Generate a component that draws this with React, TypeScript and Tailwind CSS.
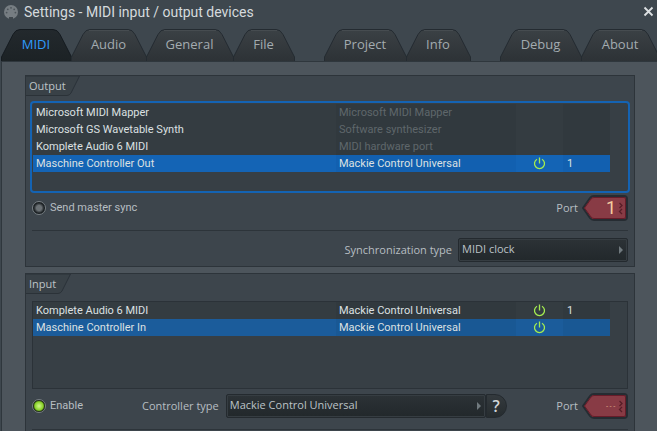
import type { ReactNode } from 'react';
import clsx from 'clsx';

type Device = {
  name: string;
  type: string;
  muted?: boolean;
  on?: boolean;
  port?: string;
};

const outputs: Device[] = [
  { name: 'Microsoft MIDI Mapper', type: 'Microsoft MIDI Mapper', muted: true },
  { name: 'Microsoft GS Wavetable Synth', type: 'Software synthesizer', muted: true },
  { name: 'Komplete Audio 6 MIDI', type: 'MIDI hardware port', muted: true },
  { name: 'Maschine Controller Out', type: 'Mackie Control Universal', on: true, port: '1' },
];

const inputs: Device[] = [
  { name: 'Komplete Audio 6 MIDI', type: 'Mackie Control Universal', on: true, port: '1' },
  { name: 'Maschine Controller In', type: 'Mackie Control Universal', on: true },
];

const tabGroups = [
  [
    { label: 'MIDI', width: 70 },
    { label: 'Audio', width: 75 },
    { label: 'General', width: 87 },
    { label: 'File', width: 61 },
  ],
  [
    { label: 'Project', width: 82 },
    { label: 'Info', width: 64 },
  ],
  [
    { label: 'Debug', width: 81 },
    { label: 'About', width: 78 },
  ],
];

const DinIcon = () => (
  <svg width="14" height="14" viewBox="0 0 14 14" aria-hidden="true">
    <circle cx="7" cy="7" r="7" fill="#767d82" />
    <rect x="5" y="12" width="4" height="2" fill="#3f474d" />
    <g fill="#4b5359">
      <circle cx="2.6" cy="7.6" r="0.9" />
      <circle cx="3.8" cy="4.3" r="0.9" />
      <circle cx="7" cy="2.8" r="0.9" />
      <circle cx="10.2" cy="4.3" r="0.9" />
      <circle cx="11.4" cy="7.6" r="0.9" />
    </g>
  </svg>
);

const PowerIcon = () => (
  <svg width="13" height="13" viewBox="0 0 13 13" fill="none" stroke="#a4ec50" strokeWidth="1.3" className="mx-auto block">
    <path d="M4 2.2A5 5 0 1 0 9 2.2" />
    <path d="M6.5 0.5V6.5" />
  </svg>
);

const Tab = ({ label, width, active }: { label: string; width: number; active: boolean }) => {
  const shape = `M0.5 32V28L12 5.5Q14.5 0.5 19 0.5H${width - 18}Q${width - 13.5} 0.5 ${width - 11} 5.5L${width + 0.5} 28V32`;
  const fill = active ? 'url(#tab-active)' : 'url(#tab-idle)';

  return (
    <button
      type="button"
      role="tab"
      aria-selected={active}
      className={clsx('relative h-8 shrink-0 pb-0.5 text-[13px] leading-[30px]', active ? 'text-[#2f9bfb]' : 'text-[#a3abb0]')}
      style={{ width }}
    >
      <svg width={width + 1} height="32" className="absolute left-0 top-0" aria-hidden="true">
        <defs>
          <linearGradient id="tab-active" x1="0" y1="0" x2="0" y2="1">
            <stop offset="0" stopColor="#23292d" />
            <stop offset="1" stopColor="#1c2225" />
          </linearGradient>
          <linearGradient id="tab-idle" x1="0" y1="0" x2="0" y2="1">
            <stop offset="0" stopColor="#3b4145" />
            <stop offset="1" stopColor="#2d3236" />
          </linearGradient>
        </defs>
        <path d={shape} fill={fill} stroke={active ? '#151b20' : '#242b31'} />
        {!active && <path d={`M18 1.5H${width - 17}`} stroke="#464c50" />}
      </svg>
      <span className="relative">{label}</span>
    </button>
  );
};

const DeviceTable = ({ label, devices, focused }: { label: string; devices: Device[]; focused?: boolean }) => {
  const selected = devices.length - 1;

  return (
    <div
      className={clsx(
        'bg-[#373f45]',
        focused ? 'mx-1 h-[92px] rounded border-2 border-[#1463b3] p-px' : 'mx-1.5 h-[88px] border border-[#2b3238]'
      )}
    >
      <table
        aria-label={label}
        className="w-full table-fixed border-collapse font-[Roboto,'Open_Sans',sans-serif] text-[11px] leading-[17px]"
      >
        <colgroup>
          <col />
          <col className="w-[180px]" />
          <col className="w-[47px]" />
          <col className="w-[47px]" />
          <col className="w-[17px]" />
        </colgroup>
        <tbody>
          {devices.map((device, index) => {
            const active = index === selected;
            const blue = focused ? 'bg-[#1464b5]' : 'bg-[#1b5c9b]';
            const blueDark = focused ? 'bg-[#1260b0]' : 'bg-[#195894]';
            return (
              <tr key={device.name} className="h-[17px] text-[#dce0e2]">
                <td className={clsx('truncate p-0 pl-[3px]', active ? blue : 'bg-[#343c41]')}>{device.name}</td>
                <td className={clsx('truncate p-0 pl-[3px]', active ? blueDark : 'bg-[#31393e]', device.muted && 'text-[#5f676b]')}>
                  {device.type}
                </td>
                <td className={clsx('p-0', active ? blue : 'bg-[#343c41]')}>{device.on && <PowerIcon />}</td>
                <td className={clsx('p-0 pl-1', active ? blueDark : 'bg-[#31393e]')}>{device.port}</td>
                <td className="p-0" />
              </tr>
            );
          })}
        </tbody>
      </table>
    </div>
  );
};

const Toggle = ({ label, checked }: { label: string; checked?: boolean }) => (
  <label className="flex items-center gap-1 font-[Roboto,'Open_Sans',sans-serif] text-[#b7bec2]">
    <input
      type="checkbox"
      defaultChecked={checked}
      className="size-3.5 appearance-none rounded-full border border-[#777e83] bg-[radial-gradient(circle,#6b7175_30%,#181d20_62%)] checked:bg-[radial-gradient(circle,#c4f07a_10%,#86cf26_50%,#1c2812_66%)]"
    />
    {label}
  </label>
);

const Dropdown = ({ id, value, className }: { id: string; value: string; className: string }) => (
  <div className={clsx('relative', className)}>
    <select
      id={id}
      defaultValue={value}
      className="block h-6 w-full appearance-none rounded-xs border border-[#242a2f] bg-linear-to-b from-[#2c3236] to-[#22282b] pb-px pl-[3px] text-[#bcc3c7] inset-ring inset-ring-[#363d42]"
    >
      <option>{value}</option>
    </select>
    <svg width="5" height="8" className="pointer-events-none absolute right-1 top-2" aria-hidden="true">
      <path d="M0 0L4 4L0 8Z" fill="#717a7f" />
    </svg>
  </div>
);

const PortInput = ({ value, empty }: { value: string; empty?: boolean }) => (
  <label className="flex items-center gap-1 text-[#b7bec2]">
    Port
    <span className="relative">
      <svg width="46" height="26" className="block" aria-hidden="true">
        <path d="M1 13L8 3Q9.500 1 12 1H42Q45 1 45 4V22Q45 25 42 25H12Q9.500 25 8 23Z" fill="#883b45" stroke="#262c32" strokeWidth="2" />
        <path d="M2.500 13L9 4Q10.500 2.500 12 2.500H42Q43.500 2.500 43.500 4V22Q43.500 23.500 42 23.500H12Q10.500 23.500 9 22Z" fill="none" stroke="#661c29" />
        <path d="M37.500 8L40 10.500L37.500 13M40 14L37.500 16.500L40 19" fill="none" stroke="#571d27" strokeWidth="1.3" />
      </svg>
      <input
        defaultValue={value}
        className={clsx(
          'absolute inset-y-0 left-2 w-[26px] bg-transparent text-right',
          empty ? "font-['Liberation_Mono',monospace] text-[6px] text-[#f5cda0]" : 'font-[Roboto,sans-serif] text-lg text-[#f5cda0]'
        )}
      />
    </span>
  </label>
);

const Group = ({ title, tabWidth, children }: { title: string; tabWidth: number; children: ReactNode }) => (
  <section className="border border-[#2d343a] bg-[#3d454c] text-[11px]">
    <h2 className="relative mb-[5px] h-5 pl-[3px] leading-[19px] text-[#bdc4c8]">
      <svg width={tabWidth} height="21" className="absolute left-0 top-0" aria-hidden="true">
        <path
          d={`M0 0H${tabWidth - 0.5}L${tabWidth - 9} 17Q${tabWidth - 10.5} 19.500 ${tabWidth - 13} 19.500H0`}
          fill="#394147"
          stroke="#2b3238"
        />
      </svg>
      <span className="relative">{title}</span>
    </h2>
    {children}
  </section>
);

const App = () => {
  return (
    <div className="flex h-screen flex-col overflow-hidden bg-[#3e474e] font-['Open_Sans','Noto_Sans',sans-serif]">
      <header className="flex h-[29px] shrink-0 items-center gap-1.5 pb-1.5 pl-1 pr-[3px]">
        <DinIcon />
        <h1 className="grow font-[Roboto,'Open_Sans',sans-serif] text-sm text-[#d5dadd]">Settings - MIDI input / output devices</h1>
        <button type="button" aria-label="Close">
          <svg width="11" height="11" stroke="#dde1e3" strokeWidth="1.8">
            <path d="M1.500 1.500L9.500 9.500M9.500 1.500L1.500 9.500" />
          </svg>
        </button>
      </header>

      <nav role="tablist" className="flex shrink-0 gap-[30px] overflow-hidden pl-px">
        {tabGroups.map((group) => (
          <div key={group[0].label} className="flex shrink-0">
            {group.map((tab) => (
              <Tab key={tab.label} label={tab.label} width={tab.width} active={tab.label === 'MIDI'} />
            ))}
          </div>
        ))}
      </nav>

      <main className="ml-px flex grow flex-col gap-1.5 border-l border-t border-[#2f373d] bg-[#4d555c] pb-1.5 pl-[23px] pr-[22px] pt-[13px]">
        <Group title="Output" tabWidth={54}>
          <DeviceTable label="Output" devices={outputs} focused />
          <div className="mx-1.5 flex items-center justify-between border-b border-[#2d343a] pb-[9px] pt-0.5">
            <Toggle label="Send master sync" />
            <PortInput value="1" />
          </div>
          <div className="mx-1.5 flex items-center justify-end gap-1.5 pb-1 pt-[7px]">
            <label htmlFor="sync-type" className="text-[#b7bec2]">Synchronization type</label>
            <Dropdown id="sync-type" value="MIDI clock" className="w-[170px]" />
          </div>
        </Group>

        <Group title="Input" tabWidth={45}>
          <div className="pt-0.5">
            <DeviceTable label="Input" devices={inputs} />
          </div>
          <div className="mx-1.5 flex items-center border-b border-[#2d343a] pb-2.5 pt-1">
            <div className="w-[110px]">
              <Toggle label="Enable" checked />
            </div>
            <label htmlFor="controller-type" className="mr-[7px] text-[#b7bec2]">Controller type</label>
            <Dropdown id="controller-type" value="Mackie Control Universal" className="w-[260px]" />
            <button
              type="button"
              aria-label="Help"
              className="h-6 w-[21px] rounded-r-xl border border-[#242a2f] bg-linear-to-b from-[#343a3e] to-[#262c2f] text-base font-semibold leading-none text-[#d0d5d8]"
            >
              ?
            </button>
            <div className="ml-auto">
              <PortInput value="---" empty />
            </div>
          </div>
          <div className="h-10" />
        </Group>
      </main>
    </div>
  );
};

export default App;
